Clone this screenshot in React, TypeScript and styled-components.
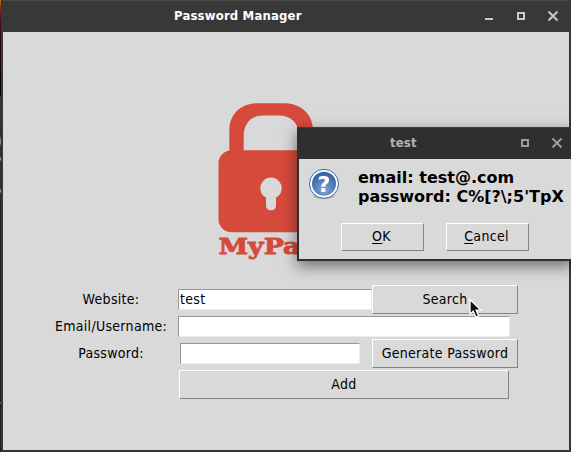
import React from "react";
import styled, { createGlobalStyle } from "styled-components";

const GlobalStyle = createGlobalStyle`
  *, *::before, *::after { box-sizing: border-box; }
  html, body { margin: 0; padding: 0; overflow: hidden; background: #2f2f2f; }
`;

const uiFont = `"DejaVu Sans Condensed", "DejaVu Sans", sans-serif`;

const Desktop = styled.div`
  position: relative;
  width: 571px;
  height: 452px;
  overflow: hidden;
  padding-left: 1px;
  background: linear-gradient(
    #c96a1c 0, #8a3018 8px, #3d0d14 22px, #22060c 50px, #0a0205 90px,
    #000 95px, #33373a 96px, #2b2e30 136px, #a5633a 139px, #7da0a8 143px,
    #2b3033 146px, #2b3033 157px, #999 158px, #999 160px, #2b3033 161px,
    #2b3033 189px, #999 190px, #999 192px, #2b3033 193px, #1c1f22 206px,
    #1c1f22 402px, #6aa0a8 403px, #1c1f22 404px
  );
`;

const Window = styled.main`
  height: 452px;
  display: flex;
  flex-direction: column;
  border: solid #373737;
  border-width: 0 2px 2px;
  background: #d9d9d9;
`;

const TitleBar = styled.header<{ $active?: boolean }>`
  flex: none;
  display: flex;
  align-items: center;
  height: 32px;
  border-top: 1px solid ${(p) => (p.$active ? "#4a4a4a" : "#3c3c3c")};
  background: ${(p) => (p.$active ? "#383838" : "#2f2f2f")};
  color: ${(p) => (p.$active ? "#fff" : "#b4b4b4")};
`;

const Title = styled.h1<{ $indent: number; $width: number }>`
  flex: none;
  margin: 0 0 1px ${(p) => p.$indent}px;
  width: ${(p) => p.$width}px;
  font: bold 13px/30px ${uiFont};
  letter-spacing: 0.17px;
  white-space: nowrap;
`;

const WindowControls = styled.svg`
  flex: none;
  display: block;
  height: 31px;
`;

const Client = styled.section`
  padding: 68px 0 0 49px;
`;

const Logo = styled.svg`
  display: block;
  margin-left: 166px;
  overflow: visible;
`;

const Form = styled.form`
  display: grid;
  grid-template-columns: 118px 194px 146px;
  grid-template-rows: 31px 23px 31px 31px;
  align-items: center;
  margin-top: 14px;
  padding-left: 8px;
`;

const Label = styled.label`
  justify-self: center;
  margin: 0 16px 2px 0;
  font: 14px/20px ${uiFont};
  letter-spacing: 0.3px;
  white-space: nowrap;
  color: #000;
`;

const Entry = styled.input<{ $width: number; $offset?: number; $wide?: boolean }>`
  width: ${(p) => p.$width}px;
  height: 21px;
  margin: 0 0 0 ${(p) => p.$offset ?? 0}px;
  padding: 0 1px 2px;
  border: 1px solid;
  border-color: #989898 #ececec #ececec #989898;
  border-radius: 0;
  outline: none;
  background: #fff;
  color: #000;
  font: 14px/17px ${uiFont};
  letter-spacing: 0.3px;
  grid-column: ${(p) => (p.$wide ? "2 / 4" : "2")};
`;

const Button = styled.button<{ $width: number; $height?: number }>`
  flex: none;
  width: ${(p) => p.$width}px;
  height: ${(p) => p.$height ?? 29}px;
  padding: 0 0 1px;
  border: 1px solid;
  border-color: #fff #828282 #828282 #fff;
  border-radius: 0;
  background: #d9d9d9;
  color: #000;
  font: 14px/20px ${uiFont};
  letter-spacing: 0.3px;
  white-space: nowrap;
`;

const AddButton = styled(Button)`
  grid-column: 2 / 4;
  margin-left: 1px;
`;

const Mnemonic = styled.span`
  text-decoration: underline;
  text-decoration-thickness: 1px;
  text-underline-offset: 2px;
`;

const Dialog = styled.section`
  position: absolute;
  left: 297px;
  top: 127px;
  width: 276px;
  height: 134px;
  border: solid #2f2f2f;
  border-width: 0 2px 2px;
  background: #d9d9d9;
  box-shadow: 0 5px 14px rgba(0, 0, 0, 0.5);
`;

const DialogBody = styled.div`
  display: flex;
  padding: 9px 0 0 9px;
`;

const Message = styled.p`
  margin: 0 0 0 18px;
  font: bold 16px/19px "DejaVu Sans", sans-serif;
  white-space: nowrap;
  color: #000;
`;

const DialogActions = styled.div`
  display: flex;
  gap: 22px;
  padding: 17px 0 0 42px;
`;

const DialogButton = styled(Button)`
  padding: 0 2px 2px 0;
`;

const Pointer = styled.svg`
  position: absolute;
  left: 469px;
  top: 298px;
`;

function PadlockLogo() {
  return (
    <Logo width="106" height="170" viewBox="218 100 106 170">
      <path
        fill="#d64a3c"
        d="M229.3 151V131C229.3 114 241 103.3 258 103.3H284C301 103.3 313 114 313 131V151H299V136C299 123 291 115.5 279 115.5H263C251 115.5 243.7 124 243.7 136V151Z"
      />
      <rect x="218.5" y="150.3" width="106" height="82" rx="13" fill="#d64a3c" />
      <circle cx="271" cy="188.3" r="10.7" fill="#d9d9d9" />
      <rect x="266" y="193" width="10" height="17.3" rx="4.5" fill="#d9d9d9" />
      <text
        x="218.5"
        y="254"
        fontFamily="DejaVu Serif, serif"
        fontWeight="bold"
        fontSize="23"
        textLength="112"
        lengthAdjust="spacingAndGlyphs"
        fill="#d64a3c"
        stroke="#d64a3c"
        strokeWidth="0.9"
        strokeLinejoin="round"
      >
        MyPass
      </text>
    </Logo>
  );
}

function QuestionIcon() {
  return (
    <svg width="32" height="32" viewBox="0 0 32 32">
      <defs>
        <radialGradient id="ball" cx="50%" cy="75%" r="65%">
          <stop offset="0" stopColor="#84a9d6" />
          <stop offset="1" stopColor="#3465a4" />
        </radialGradient>
      </defs>
      <ellipse cx="16" cy="28" rx="11" ry="3" fill="#999" opacity=".6" />
      <circle cx="16" cy="15.8" r="14.5" fill="#fff" stroke="#3c68a5" />
      <circle cx="16" cy="15.8" r="12" fill="url(#ball)" />
      <text
        x="16"
        y="24"
        textAnchor="middle"
        fontFamily="DejaVu Sans, sans-serif"
        fontWeight="bold"
        fontSize="22"
        fill="#fff"
      >
        ?
      </text>
    </svg>
  );
}

export default function App() {
  return (
    <>
      <GlobalStyle />
      <Desktop>
        <Window>
          <TitleBar $active>
            <Title $indent={171} $width={308}>Password Manager</Title>
            <WindowControls width="84" height="31" viewBox="0 0 84 31">
              <path fill="#c8c8c8" d="M3 17h8v2H3z" />
              <path fill="none" stroke="#c8c8c8" strokeWidth="2" d="M36 12h6v6h-6z" />
              <path fill="none" stroke="#c8c8c8" strokeWidth="2" d="M66.5 10.5l9 9m0-9l-9 9" />
            </WindowControls>
          </TitleBar>
          <Client>
            <PadlockLogo />
            <Form onSubmit={(e) => e.preventDefault()}>
              <Label htmlFor="site">Website:</Label>
              <Entry id="site" $width={194} defaultValue="test" />
              <Button type="button" $width={146}>Search</Button>
              <Label htmlFor="user">Email/Username:</Label>
              <Entry id="user" $width={332} $wide />
              <Label htmlFor="pass">Password:</Label>
              <Entry id="pass" $width={180} $offset={2} />
              <Button type="button" $width={146}>Generate Password</Button>
              <AddButton type="button" $width={330}>Add</AddButton>
            </Form>
          </Client>
        </Window>
        <Dialog role="dialog">
          <TitleBar>
            <Title $indent={91} $width={126}>test</Title>
            <WindowControls width="55" height="31" viewBox="0 0 55 31">
              <path fill="none" stroke="#9c9c9c" strokeWidth="2" d="M6 12h6v6H6z" />
              <path fill="none" stroke="#9c9c9c" strokeWidth="2" d="M36.5 10.5l9 9m0-9l-9 9" />
            </WindowControls>
          </TitleBar>
          <DialogBody>
            <QuestionIcon />
            <Message>
              email: test@.com
              <br />
              password: C%[?\;5'TpX
            </Message>
          </DialogBody>
          <DialogActions>
            <DialogButton type="button" $width={83} $height={28}>
              <Mnemonic>O</Mnemonic>K
            </DialogButton>
            <DialogButton type="button" $width={83} $height={28}>
              <Mnemonic>C</Mnemonic>ancel
            </DialogButton>
          </DialogActions>
        </Dialog>
        <Pointer width="14" height="21" viewBox="0 0 14 21">
          <path
            d="M1 1.5v14.7l3.2-3 2.6 5.8 2.8-1.2-2.5-5.6h5z"
            fill="#111"
            stroke="#fff"
            strokeWidth="1.3"
          />
        </Pointer>
      </Desktop>
    </>
  );
}
